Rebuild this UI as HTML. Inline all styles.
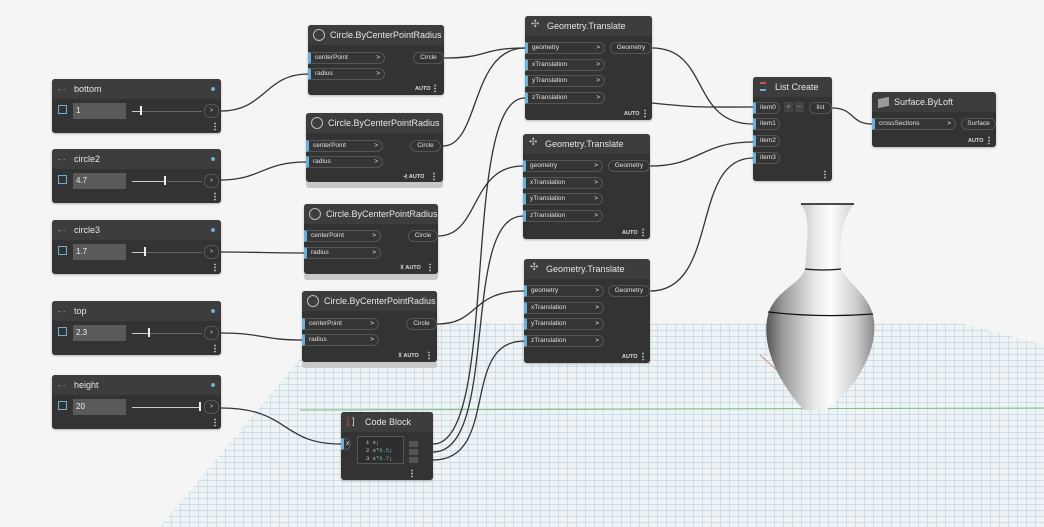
<!DOCTYPE html>
<html><head><meta charset="utf-8"><style>
*{margin:0;padding:0;box-sizing:border-box}
body{width:1044px;height:527px;background:#f5f5f5;position:relative;overflow:hidden;font-family:"Liberation Sans",sans-serif;color:#ddd}
.n{position:absolute;background:#333333;border-radius:3px;box-shadow:0 1px 2px rgba(0,0,0,.25)}
.h{position:absolute;left:0;right:0;top:0;background:#3d3d3d;border-radius:3px 3px 0 0;font-size:9px;color:#e6e6e6;padding-left:22px;line-height:20px;white-space:nowrap}
.p{position:absolute;height:12px;border:1px solid #555;border-left:3px solid #6ab0d8;border-radius:0 6px 6px 0;font-size:6.5px;line-height:10px;padding-left:4px;color:#e0e0e0;background:#353535}
.p b{position:absolute;right:4px;top:0;font-weight:normal}
.o{position:absolute;height:12px;border:1px solid #555;border-radius:6px;font-size:6.5px;line-height:10px;text-align:center;color:#e0e0e0}
.auto{position:absolute;font-size:5.5px;font-weight:bold;color:#ddd}
.dots{position:absolute;width:2px;height:9px;background:radial-gradient(circle,#aaa 0.8px,transparent 1px) 0 0/2px 3px}
.ci{position:absolute;left:5px;top:4px;width:12px;height:12px;border:1px solid #bbb;border-radius:50%}
.cb{position:absolute;left:6px;top:26px;width:9px;height:9px;border:1px solid #6ab0d8}
.in{position:absolute;left:21px;top:24px;width:53px;height:16px;background:#5a5a5a;font-size:8px;line-height:16px;padding-left:3px;color:#eee}
.tr{position:absolute;top:32px;height:1px;background:#ccc}
.th{position:absolute;top:27px;width:2px;height:9px;background:#eee}
.op{position:absolute;left:152px;top:25px;width:15px;height:14px;border:1px solid #555;border-radius:6px;font-size:6px;color:#ccc;text-align:center;line-height:12px}
.dot{position:absolute;right:6px;top:8px;width:4px;height:4px;border-radius:50%;background:#6ab0d8}
.grey{position:absolute;left:0;right:0;bottom:-6px;height:6px;background:#c8c8c8;border-radius:0 0 3px 3px}
</style></head><body>
<svg width="1044" height="527" style="position:absolute;left:0;top:0">
<defs>
<clipPath id="fl"><polygon points="330,323 960,323 1044,345 1044,527 160,527"/></clipPath>
<linearGradient id="vg" x1="0" y1="0" x2="1" y2="0"><stop offset="0" stop-color="#555"/><stop offset="0.15" stop-color="#999"/><stop offset="0.45" stop-color="#e8e8e8"/><stop offset="0.6" stop-color="#fdfdfd"/><stop offset="0.85" stop-color="#c8c8c8"/><stop offset="1" stop-color="#888"/></linearGradient>
<pattern id="gp" width="9" height="6" patternUnits="userSpaceOnUse"><path d="M0 0.5H9M0.5 0V6" stroke="#c3d6df" stroke-width="0.7" fill="none"/></pattern>
</defs>
<g clip-path="url(#fl)">
<rect x="0" y="300" width="1044" height="227" fill="#eef3f5"/>
<rect x="0" y="300" width="1044" height="227" fill="url(#gp)" transform="translate(0,0)"/>
<line x1="300" y1="410" x2="1044" y2="408" stroke="#7fbf7f" stroke-width="1"/>
<line x1="760" y1="355" x2="805" y2="395" stroke="#d88" stroke-width="1"/>
</g>
<path d="M801 204 L854 204 C845 215 838 235 841 269 C850 285 868 295 873 315 C880 345 860 385 826 410 L804 410 C780 385 760 345 768 315 C775 290 800 285 805 269 C808 235 810 215 801 204 Z" fill="url(#vg)"/>
<path d="M801 204 L854 204" stroke="#111" stroke-width="1.5"/>
<path d="M805 269 Q823 271 841 269" stroke="#111" stroke-width="1.3" fill="none"/>
<path d="M768 312 Q820 318 873 314" stroke="#111" stroke-width="1.3" fill="none"/>
<g stroke="#333" stroke-width="1.3" fill="none">
<path d="M221 111 C265 111 265 74 308 74"/>
<path d="M219 180 C262 180 262 162 306 162"/>
<path d="M221 252 C262 252 262 253 304 253"/>
<path d="M221 333 C262 333 262 340 302 340"/>
<path d="M221 408 C290 408 280 444 341 444"/>
<path d="M444 58 C490 58 480 48 525 48"/>
<path d="M443 146 C480 146 470 48 525 48"/>
<path d="M438 236 C480 236 470 166 523 166"/>
<path d="M437 324 C480 324 470 291 524 291"/>
<path d="M433 444 C500 444 460 98 525 98"/>
<path d="M433 452 C500 452 460 216 523 216"/>
<path d="M433 460 C500 460 460 341 524 341"/>
<path d="M652 48 C710 48 690 124 753 124"/>
<path d="M652 103 C700 108 700 107 753 107"/>
<path d="M650 166 C700 166 700 142 753 142"/>
<path d="M650 291 C720 291 690 158 753 158"/>
<path d="M832 108 C855 108 850 124 872 124"/>
</g>
</svg>

<!-- sliders -->
<div class="n" style="left:52px;top:79px;width:169px;height:54px"><div class="h">bottom</div><span style="position:absolute;left:6px;top:6px;font-size:8px;color:#bbb">- ·</span><i class="dot"></i><i class="cb"></i><div class="in">1</div><i class="tr" style="left:80px;width:8px"></i><i class="th" style="left:88px"></i><i class="tr" style="left:90px;width:60px;background:#666"></i><div class="op">&gt;</div><i class="dots" style="left:162px;top:43px"></i></div>
<div class="n" style="left:52px;top:149px;width:169px;height:54px"><div class="h">circle2</div><span style="position:absolute;left:6px;top:6px;font-size:8px;color:#bbb">- ·</span><i class="dot"></i><i class="cb"></i><div class="in">4.7</div><i class="tr" style="left:80px;width:33px"></i><i class="th" style="left:112px"></i><i class="tr" style="left:115px;width:35px;background:#666"></i><div class="op">&gt;</div><i class="dots" style="left:162px;top:43px"></i></div>
<div class="n" style="left:52px;top:220px;width:169px;height:54px"><div class="h">circle3</div><span style="position:absolute;left:6px;top:6px;font-size:8px;color:#bbb">- ·</span><i class="dot"></i><i class="cb"></i><div class="in">1.7</div><i class="tr" style="left:80px;width:12px"></i><i class="th" style="left:92px"></i><i class="tr" style="left:94px;width:56px;background:#666"></i><div class="op">&gt;</div><i class="dots" style="left:162px;top:43px"></i></div>
<div class="n" style="left:52px;top:301px;width:169px;height:54px"><div class="h">top</div><span style="position:absolute;left:6px;top:6px;font-size:8px;color:#bbb">- ·</span><i class="dot"></i><i class="cb"></i><div class="in">2.3</div><i class="tr" style="left:80px;width:16px"></i><i class="th" style="left:96px"></i><i class="tr" style="left:98px;width:52px;background:#666"></i><div class="op">&gt;</div><i class="dots" style="left:162px;top:43px"></i></div>
<div class="n" style="left:52px;top:375px;width:169px;height:54px"><div class="h">height</div><span style="position:absolute;left:6px;top:6px;font-size:8px;color:#bbb">- ·</span><i class="dot"></i><i class="cb"></i><div class="in">20</div><i class="tr" style="left:80px;width:68px"></i><i class="th" style="left:147px"></i><div class="op">&gt;</div><i class="dots" style="left:162px;top:43px"></i></div>

<!-- circles -->
<div class="n" style="left:308px;top:25px;width:136px;height:70px"><div class="h">Circle.ByCenterPointRadius</div><i class="ci"></i><div class="p" style="left:0;top:27px;width:77px">centerPoint<b>&gt;</b></div><div class="p" style="left:0;top:43px;width:77px">radius<b>&gt;</b></div><div class="o" style="left:105px;top:27px;width:31px">Circle</div><span class="auto" style="left:107px;top:61px">AUTO</span><i class="dots" style="left:126px;top:59px"></i></div>
<div class="n" style="left:306px;top:113px;width:137px;height:69px"><div class="h">Circle.ByCenterPointRadius</div><i class="ci"></i><div class="p" style="left:0;top:27px;width:77px">centerPoint<b>&gt;</b></div><div class="p" style="left:0;top:43px;width:77px">radius<b>&gt;</b></div><div class="o" style="left:104px;top:27px;width:31px">Circle</div><span class="auto" style="left:97px;top:61px">⊰ AUTO</span><i class="dots" style="left:127px;top:59px"></i><div class="grey"></div></div>
<div class="n" style="left:304px;top:204px;width:134px;height:70px"><div class="h">Circle.ByCenterPointRadius</div><i class="ci"></i><div class="p" style="left:0;top:26px;width:77px">centerPoint<b>&gt;</b></div><div class="p" style="left:0;top:43px;width:77px">radius<b>&gt;</b></div><div class="o" style="left:104px;top:26px;width:30px">Circle</div><span class="auto" style="left:96px;top:61px">⊼ AUTO</span><i class="dots" style="left:125px;top:59px"></i><div class="grey"></div></div>
<div class="n" style="left:302px;top:291px;width:135px;height:71px"><div class="h">Circle.ByCenterPointRadius</div><i class="ci"></i><div class="p" style="left:0;top:27px;width:77px">centerPoint<b>&gt;</b></div><div class="p" style="left:0;top:43px;width:77px">radius<b>&gt;</b></div><div class="o" style="left:104px;top:27px;width:31px">Circle</div><span class="auto" style="left:96px;top:62px">⊼ AUTO</span><i class="dots" style="left:126px;top:60px"></i><div class="grey"></div></div>

<!-- geometry translate -->
<div class="n" style="left:525px;top:16px;width:127px;height:104px"><div class="h">Geometry.Translate</div><span style="position:absolute;left:6px;top:3px;font-size:10px;color:#bbb">✣</span><div class="p" style="left:0;top:26px;width:80px">geometry<b>&gt;</b></div><div class="p" style="left:0;top:43px;width:80px">xTranslation<b>&gt;</b></div><div class="p" style="left:0;top:59px;width:80px">yTranslation<b>&gt;</b></div><div class="p" style="left:0;top:76px;width:80px">zTranslation<b>&gt;</b></div><div class="o" style="left:85px;top:26px;width:42px">Geometry</div><span class="auto" style="left:99px;top:95px">AUTO</span><i class="dots" style="left:119px;top:93px"></i></div>
<div class="n" style="left:523px;top:134px;width:127px;height:105px"><div class="h">Geometry.Translate</div><span style="position:absolute;left:6px;top:3px;font-size:10px;color:#bbb">✣</span><div class="p" style="left:0;top:26px;width:80px">geometry<b>&gt;</b></div><div class="p" style="left:0;top:43px;width:80px">xTranslation<b>&gt;</b></div><div class="p" style="left:0;top:59px;width:80px">yTranslation<b>&gt;</b></div><div class="p" style="left:0;top:76px;width:80px">zTranslation<b>&gt;</b></div><div class="o" style="left:85px;top:26px;width:42px">Geometry</div><span class="auto" style="left:99px;top:96px">AUTO</span><i class="dots" style="left:119px;top:94px"></i></div>
<div class="n" style="left:524px;top:259px;width:126px;height:104px"><div class="h">Geometry.Translate</div><span style="position:absolute;left:6px;top:3px;font-size:10px;color:#bbb">✣</span><div class="p" style="left:0;top:26px;width:80px">geometry<b>&gt;</b></div><div class="p" style="left:0;top:43px;width:80px">xTranslation<b>&gt;</b></div><div class="p" style="left:0;top:59px;width:80px">yTranslation<b>&gt;</b></div><div class="p" style="left:0;top:76px;width:80px">zTranslation<b>&gt;</b></div><div class="o" style="left:84px;top:26px;width:42px">Geometry</div><span class="auto" style="left:98px;top:95px">AUTO</span><i class="dots" style="left:118px;top:93px"></i></div>

<!-- list create -->
<div class="n" style="left:753px;top:77px;width:79px;height:104px"><div class="h">List Create</div><span style="position:absolute;left:7px;top:5px;width:6px;height:9px;border-top:2px solid #d05050;border-bottom:2px solid #6ab0d8"></span><div class="p" style="left:0;top:25px;width:27px">item0</div><div class="p" style="left:0;top:41px;width:27px">item1</div><div class="p" style="left:0;top:58px;width:27px">item2</div><div class="p" style="left:0;top:75px;width:27px">item3</div><span style="position:absolute;left:31px;top:25px;width:9px;height:10px;background:#444;font-size:8px;line-height:10px;text-align:center;color:#999">+</span><span style="position:absolute;left:42px;top:25px;width:9px;height:10px;background:#444;font-size:8px;line-height:10px;text-align:center;color:#999">−</span><div class="o" style="left:56px;top:25px;width:23px">list</div><i class="dots" style="left:71px;top:93px"></i></div>

<!-- surface -->
<div class="n" style="left:872px;top:92px;width:124px;height:55px"><div class="h">Surface.ByLoft</div><span style="position:absolute;left:6px;top:6px;width:11px;height:9px;background:#999;transform:skewY(-12deg)"></span><div class="p" style="left:0;top:26px;width:84px">crossSections<b>&gt;</b></div><div class="o" style="left:89px;top:26px;width:35px">Surface</div><span class="auto" style="left:96px;top:46px">AUTO</span><i class="dots" style="left:116px;top:44px"></i></div>

<!-- code block -->
<div class="n" style="left:341px;top:412px;width:92px;height:68px"><div class="h" style="padding-left:24px">Code Block</div><span style="position:absolute;left:6px;top:4px;font-size:9px;color:#d05050">[ <span style="color:#ddd">]</span></span><div class="p" style="left:0;top:26px;width:10px;padding-left:2px">x</div><div style="position:absolute;left:16px;top:24px;width:47px;height:28px;border:1px solid #555;background:#2e2e2e;font-family:'Liberation Mono',monospace;font-size:5.5px;line-height:8px;padding:2px 0 0 8px;color:#ccc">1 x;<br>2 x*<span style="color:#6ab0d8">0.5</span>;<br>3 x*<span style="color:#6ab0d8">0.7</span>;</div><i style="position:absolute;left:68px;top:29px;width:9px;height:6px;background:#555"></i><i style="position:absolute;left:68px;top:37px;width:9px;height:6px;background:#555"></i><i style="position:absolute;left:68px;top:45px;width:9px;height:6px;background:#555"></i><i class="dots" style="left:70px;top:57px"></i></div>
</body></html>
